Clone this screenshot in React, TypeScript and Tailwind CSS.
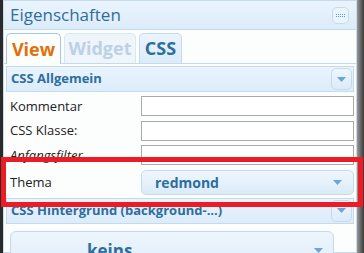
const Arrow = () => (
  <svg width="9" height="5" viewBox="0 0 9 5">
    <path d="M0 0 H9 L4.5 5 Z" fill="#6fa3d6" />
  </svg>
);

const HeaderButton = ({ children }: { children: React.ReactNode }) => (
  <div className="flex h-[22px] w-[21px] items-center justify-center rounded-[5px] border border-[#c5dbec] bg-gradient-to-b from-[#eef6fd] to-[#dcebf9]">
    {children}
  </div>
);

const Section = ({ title }: { title: string }) => (
  <div className="flex h-[26px] items-center justify-between border border-[#c5dbec] bg-gradient-to-b from-[#eaf4fd] to-[#dcecfa] pl-[4px] pr-[1px]">
    <span className="text-[13px] font-bold text-[#2e6e9e]">{title}</span>
    <HeaderButton>
      <Arrow />
    </HeaderButton>
  </div>
);

const Field = ({ label, italic }: { label: string; italic?: boolean }) => (
  <div className="flex h-[24.5px] items-center">
    <span className={`w-[135px] pl-[4px] text-[13px] text-[#222] ${italic ? "italic" : ""}`}>{label}</span>
    <div className="h-[20px] flex-1 border border-[#aaa] bg-white" />
  </div>
);

const App = () => {
  return (
    <div
      className="relative flex h-[253px] w-[364px] overflow-hidden bg-[#2b2b2b]"
      style={{ fontFamily: '"Open Sans", sans-serif' }}
    >
      <div className="w-[3px] bg-[#2a2a2a]" />
      <div className="flex w-[354px] flex-col border border-[#c5dbec] bg-[#fcfdfd]">
        {/* title bar */}
        <div className="flex h-[29px] shrink-0 items-center justify-between border-b border-[#c5dbec] bg-gradient-to-b from-[#eaf4fd] to-[#dcecfa] pl-[6px] pr-[7px]">
          <span className="text-[17px] text-[#2e6e9e]">Eigenschaften</span>
          <div className="flex h-[17px] w-[17px] flex-col items-center justify-center gap-[1px] rounded-[5px] border border-[#c5dbec] bg-[#eaf4fd]">
            <div className="w-[9px] border-t border-dotted border-[#5b9bd5]" />
            <div className="w-[9px] border-t border-dotted border-[#5b9bd5]" />
          </div>
        </div>

        {/* tabs */}
        <div className="flex h-[34px] shrink-0 items-end gap-[3px] border-b border-[#c5dbec] pl-[2px]">
          <div className="-mb-px flex h-[31px] w-[55px] items-center justify-center rounded-t-[5px] border border-b-0 border-[#a6c9e2] bg-[#fcfdfd] text-[18px] font-bold text-[#e17009]">
            View
          </div>
          <div className="flex h-[30px] w-[72px] items-center justify-center rounded-t-[5px] border border-b-0 border-[#dbe8f3] bg-[#eef5fb] text-[18px] font-bold text-[#bcd2e4]">
            Widget
          </div>
          <div className="flex h-[30px] w-[43px] items-center justify-center rounded-t-[5px] border border-b-0 border-[#c5dbec] bg-gradient-to-b from-[#eaf4fd] to-[#dcecfa] text-[18px] font-bold text-[#2e6e9e]">
            CSS
          </div>
        </div>

        {/* content */}
        <div className="flex flex-col px-[2px] pt-[2px]">
          <Section title="CSS Allgemein" />
          <div className="flex flex-col pt-[2px]">
            <Field label="Kommentar" />
            <Field label="CSS Klasse:" />
            <Field label="Anfangsfilter" italic />
          </div>
          <div className="flex h-[30px] items-center">
            <span className="w-[135px] pl-[4px] text-[13px] text-[#222]">Thema</span>
            <div className="flex h-[25px] flex-1 items-center justify-between rounded-[5px] border border-[#c5dbec] bg-gradient-to-b from-[#eef6fd] to-[#dcebf9] pl-[13px] pr-[11px]">
              <span className="text-[14px] font-bold text-[#2e6e9e]">redmond</span>
              <Arrow />
            </div>
          </div>
          <Section title="CSS Hintergrund (background-...)" />
          <div className="mt-[7px] ml-[4px] mr-[20px] flex h-[40px] shrink-0 items-center justify-between rounded-[6px] border border-[#c5dbec] bg-gradient-to-b from-[#eef6fd] to-[#dcebf9] pl-[76px] pr-[10px]">
            <span className="text-[17px] font-bold text-[#2e6e9e]">keins</span>
            <Arrow />
          </div>
        </div>
      </div>
      <div className="w-[7px] bg-gradient-to-r from-[#9a9a9a] to-[#3a3a3a]" />

      {/* annotation */}
      <div className="absolute left-[1px] top-[157px] h-[50px] w-[362px] border-[5px] border-[#ed1c24]" />
    </div>
  );
};

export default App;
